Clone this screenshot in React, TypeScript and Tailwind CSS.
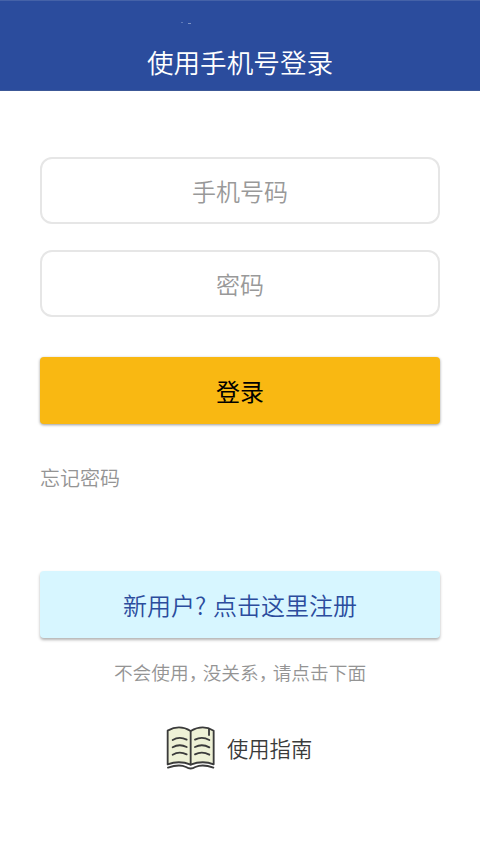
import React from "react";

function BookIcon() {
  return (
    <svg width="50" height="45" viewBox="0 0 150 135" fill="none" stroke="#3b3b3b" strokeWidth="5.5" strokeLinecap="round" strokeLinejoin="round">
      <path d="M5 17 Q40 -3 74 18 Q110 -3 143 17 V118 Q110 105 74 119 Q40 105 5 118 Z" fill="#eef1d6" />
      <path d="M74 18 V119" />
      <path d="M129 12 V30" />
      <path d="M20 45 Q40 33 62 44 M20 67 Q40 55 62 66 M20 89 Q40 77 62 88" />
      <path d="M87 44 Q108 33 130 45 M87 66 Q108 55 130 67 M87 88 Q108 77 130 89" />
      <path d="M6 128 Q40 116 60 126 Q74 135 88 126 Q110 116 142 128" />
    </svg>
  );
}

const field =
  "block h-[67px] w-full rounded-xl border-2 border-[#e6e6e6] bg-white px-3 text-center text-[24px] text-[#999] placeholder:text-[#999] placeholder:opacity-100 outline-none";

export default function App() {
  return (
    <div className="flex h-[853px] w-[480px] flex-col overflow-hidden bg-white font-['Noto_Sans_CJK_SC',sans-serif] font-[350]">
      <header className="relative flex h-[91px] shrink-0 items-end justify-center border-t border-b border-t-[#4562a8] border-b-[#3c5897] bg-[#2b4c9d] pb-[8px]">
        <span className="absolute top-[21px] left-[181px] h-px w-[2px] bg-[#5f7ab8]" />
        <span className="absolute top-[22px] left-[188px] h-px w-[3px] bg-[#7f95c6]" />
        <h1 className="text-[26.6px] font-[350] leading-[40px] text-white">使用手机号登录</h1>
      </header>
      <main className="flex flex-col px-[40px] pt-[66px]">
        <input className={field} type="tel" placeholder="手机号码" />
        <input className={`${field} mt-[26px]`} type="password" placeholder="密码" />
        <button className="mt-[40px] h-[67px] rounded bg-[#f9b812] text-[24px] font-normal text-black shadow-[0_1px_3px_rgba(0,0,0,0.4)]">
          登录
        </button>
        <a className="mt-[39px] self-start text-[20px] leading-[30px] text-[#949494]">忘记密码</a>
        <button className="mt-[78px] flex h-[67px] items-center justify-center rounded-sm bg-[#d7f6ff] text-[24px] text-[#2b4c9d] shadow-[0_2px_3px_rgba(0,0,0,0.3)]">
          新用户<span className="w-[18px] text-left">?</span>点击这里注册
        </button>
        <p className="mt-[20px] flex justify-center text-[18.7px] leading-[28px] text-[#949494] [font-feature-settings:'halt']">
          不会使用<span className="w-[14px]">，</span>没关系<span className="w-[14px]">，</span>请点击下面
        </p>
        <div className="mt-[39px] flex items-center pl-[126px]">
          <BookIcon />
          <span className="ml-[11px] text-[21.3px] leading-[32px] text-[#3a3a3a]">使用指南</span>
        </div>
      </main>
    </div>
  );
}
